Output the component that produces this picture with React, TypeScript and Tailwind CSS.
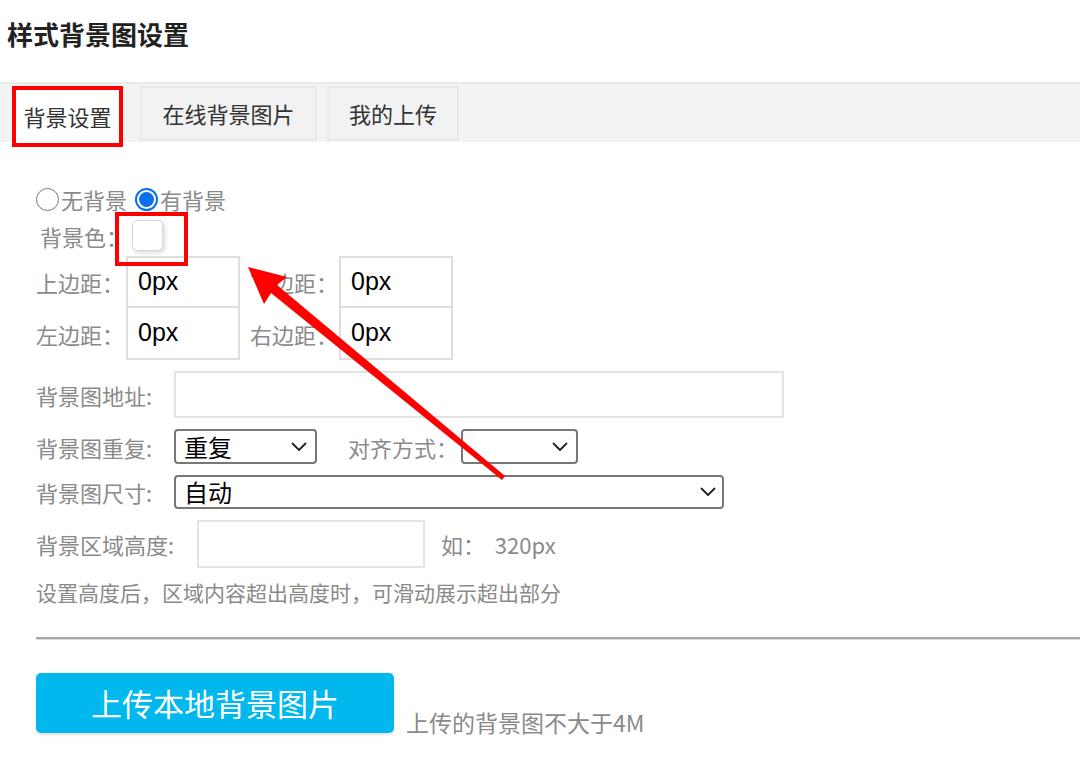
import React from "react";

function Chevron() {
  return (
    <svg width="16" height="10" viewBox="0 0 16 10" className="shrink-0">
      <polyline points="1.5,1.5 8,8 14.5,1.5" fill="none" stroke="#222" strokeWidth="1.8" strokeLinecap="round" strokeLinejoin="round" />
    </svg>
  );
}

function Label({ children, w }: { children: React.ReactNode; w: string }) {
  return <div className={`${w} shrink-0 text-[22px] text-[#8a8a8a] leading-none whitespace-nowrap`}>{children}</div>;
}

const latin = { fontFamily: '"Liberation Sans", "Noto Sans CJK SC", sans-serif' };

export default function App() {
  return (
    <div
      className="relative w-[1080px] h-[775px] bg-white overflow-hidden"
      style={{ fontFamily: '"Noto Sans CJK SC", "Noto Sans", sans-serif' }}
    >
      {/* Title */}
      <div className="h-[82px] pl-[7px] pt-[16px]">
        <div className="text-[26px] font-bold text-[#222] leading-[36px]">样式背景图设置</div>
      </div>

      {/* Tabs */}
      <div className="h-[60px] bg-[#f3f3f3] border-t-2 border-[#e9e9e9] pl-[12px] pt-[2px] flex items-start">
        <div className="w-[111px] h-[61px] bg-white border-4 border-[#ff0000] flex items-center justify-center text-[22px] text-[#333] relative z-10">
          背景设置
        </div>
        <div className="ml-[17px] w-[177px] h-[55px] bg-[#f2f2f2] border-2 border-[#e9e9e9] flex items-center justify-center text-[22px] text-[#333]">
          在线背景图片
        </div>
        <div className="ml-[10px] w-[132px] h-[55px] bg-[#f2f2f2] border-2 border-[#e9e9e9] flex items-center justify-center text-[22px] text-[#333]">
          我的上传
        </div>
      </div>

      {/* Form */}
      <div className="pl-[36px]">
        {/* radios */}
        <div className="mt-[45px] h-[24px] flex items-center text-[22px] text-[#8a8a8a]">
          <div className="w-[23px] h-[23px] rounded-full border-[1.5px] border-[#777] bg-white" />
          <span className="ml-[2px]">无背景</span>
          <div className="ml-[8px] w-[23px] h-[23px] rounded-full border-2 border-[#0b6ff0] flex items-center justify-center">
            <div className="w-[15px] h-[15px] rounded-full bg-[#0b6ff0]" />
          </div>
          <span className="ml-[2px]">有背景</span>
        </div>

        {/* color */}
        <div className="mt-[9px] h-[31px] flex items-center">
          <div className="pl-[4px] w-[96px] text-[22px] text-[#8a8a8a] leading-none whitespace-nowrap">背景色：</div>
          <div className="w-[31px] h-[31px] rounded-[5px] bg-white border border-[#d6d6d6] shadow-[2px_2px_5px_rgba(0,0,0,0.15)]" />
        </div>

        {/* margins */}
        <div className="mt-[5px] flex flex-col">
          <div className="h-[52px] flex items-center">
            <Label w="w-[90px]">上边距：</Label>
            <div className="w-[114px] h-[52px] border-2 border-[#dedede] flex items-center pl-[10px] text-[25px] text-black" style={latin}>0px</div>
            <div className="ml-[10px]">
              <Label w="w-[89px]">下边距：</Label>
            </div>
            <div className="w-[114px] h-[52px] border-2 border-[#dedede] flex items-center pl-[10px] text-[25px] text-black" style={latin}>0px</div>
          </div>
          <div className="h-[52px] flex items-center">
            <Label w="w-[90px]">左边距：</Label>
            <div className="w-[114px] h-[52px] border-2 border-t-0 border-[#dedede] flex items-center pl-[10px] text-[25px] text-black" style={latin}>0px</div>
            <div className="ml-[10px]">
              <Label w="w-[89px]">右边距：</Label>
            </div>
            <div className="w-[114px] h-[52px] border-2 border-t-0 border-[#dedede] flex items-center pl-[10px] text-[25px] text-black" style={latin}>0px</div>
          </div>
        </div>

        {/* address */}
        <div className="mt-[11px] h-[47px] flex items-center">
          <Label w="w-[138px]">背景图地址:</Label>
          <div className="w-[610px] h-[47px] border-2 border-[#e3e3e3]" />
        </div>

        {/* repeat */}
        <div className="mt-[11px] h-[35px] flex items-center">
          <Label w="w-[138px]">背景图重复:</Label>
          <div className="w-[143px] h-[35px] border-2 border-[#777] rounded-[4px] flex items-center justify-between pl-[8px] pr-[8px] text-[24px] text-black">
            <span>重复</span>
            <Chevron />
          </div>
          <div className="ml-[31px]">
            <Label w="w-[113px]">对齐方式：</Label>
          </div>
          <div className="w-[117px] h-[35px] border-2 border-[#777] rounded-[4px] flex items-center justify-end pr-[8px]">
            <Chevron />
          </div>
        </div>

        {/* size */}
        <div className="mt-[11px] h-[34px] flex items-center">
          <Label w="w-[138px]">背景图尺寸:</Label>
          <div className="w-[550px] h-[34px] border-2 border-[#777] rounded-[4px] flex items-center justify-between pl-[8px] pr-[6px] text-[24px] text-black">
            <span>自动</span>
            <Chevron />
          </div>
        </div>

        {/* height */}
        <div className="mt-[11px] h-[48px] flex items-center">
          <Label w="w-[161px]">背景区域高度:</Label>
          <div className="w-[228px] h-[48px] border-2 border-[#e3e3e3]" />
          <div className="ml-[16px] text-[22px] text-[#8a8a8a] whitespace-pre">如：  320px</div>
        </div>

        {/* help */}
        <div className="mt-[13px] h-[24px] flex items-center text-[21px] text-[#8a8a8a] whitespace-nowrap">
          设置高度后，区域内容超出高度时，可滑动展示超出部分
        </div>

        {/* separator */}
        <div className="mt-[32px] h-[3px] border-t-2 border-b border-t-[#a8a8a8] border-b-[#dcdcdc]" />

        {/* upload */}
        <div className="mt-[33px] flex items-end">
          <div className="w-[358px] h-[60px] rounded-[5px] bg-[#00b8ee] shadow-[0_2px_3px_rgba(0,0,0,0.12)] flex items-center justify-center text-[31px] text-white">
            上传本地背景图片
          </div>
          <div className="ml-[12px] mb-[-6px] text-[23px] text-[#8a8a8a] whitespace-nowrap">上传的背景图不大于4M</div>
        </div>
      </div>

      {/* Annotation: red box around swatch */}
      <div className="absolute left-[115px] top-[212px] w-[73px] h-[54px] border-4 border-[#ff0000] pointer-events-none" />

      {/* Annotation: arrow */}
      <svg className="absolute left-0 top-0 pointer-events-none" width="1080" height="775" viewBox="0 0 1080 775">
        <polygon
          points="248,267 264,304 271,293 502,480 505,476 277,285 287,277"
          fill="#ff0000"
        />
      </svg>
    </div>
  );
}
